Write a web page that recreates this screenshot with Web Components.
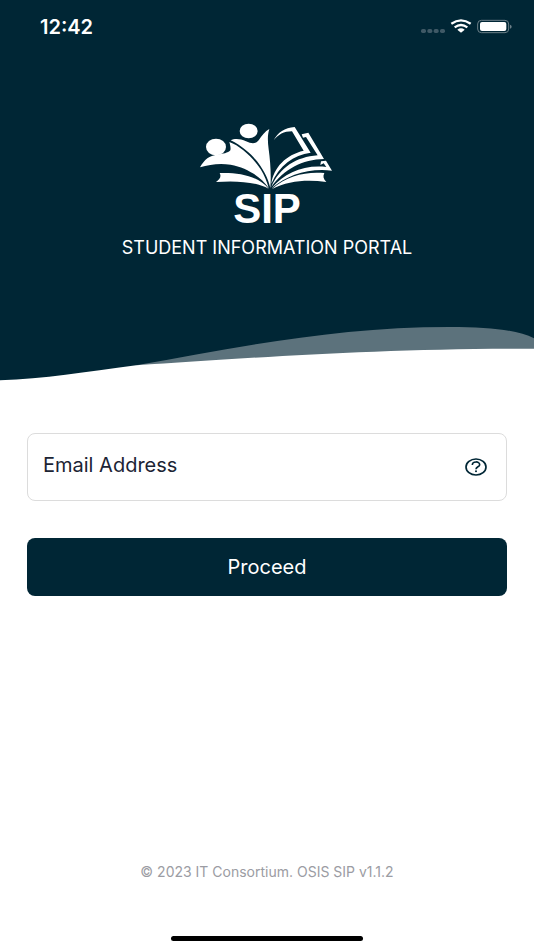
<!DOCTYPE html>
<html lang="en">
<head>
  <meta charset="UTF-8">
  <meta name="viewport" content="width=device-width, initial-scale=1.0">
  <title>Student Information Portal</title>
  <style>
    body {
      margin: 0;
      background-color: white;
      font-family: Inter, "Liberation Sans", sans-serif;
      --navy: #002635;
    }
  </style>
</head>
<body>
  <login-screen>
    <status-bar slot="status" time="12:42"></status-bar>
    <portal-logo slot="brand" short="SIP" name="STUDENT INFORMATION PORTAL"></portal-logo>
    <email-form label="Email Address" action-text="Proceed"></email-form>
    <span slot="footer">© 2023 IT Consortium. OSIS SIP v1.1.2</span>
  </login-screen>

  <script>
    class StatusBar extends HTMLElement {
      constructor() {
        super();
        this.attachShadow({ mode: "open" });
      }

      connectedCallback() {
        this.shadowRoot.innerHTML = `
          <style>
            :host {
              display: flex;
              justify-content: space-between;
              align-items: center;
              height: 54px;
              padding: 0 22px 0 40px;
              color: white;
            }
            time {
              font-size: 20px;
              font-weight: 600;
            }
            svg {
              display: block;
            }
          </style>
          <time>${this.getAttribute("time")}</time>
          <svg width="92" height="16" viewBox="0 0 276 48" role="img" aria-label="Wi-Fi on, battery full">
            <g fill="#3f5966">
              <rect x="3" y="30" width="15" height="12" rx="5"/>
              <rect x="22" y="30" width="15" height="12" rx="5"/>
              <rect x="41" y="30" width="15" height="12" rx="5"/>
              <rect x="60" y="30" width="15" height="12" rx="5"/>
            </g>
            <g fill="none" stroke="white" stroke-width="7">
              <path d="M94 14 Q123 -6 152 14"/>
              <path d="M104 25 Q123 11 142 25"/>
            </g>
            <path d="M112 32 Q123 24 134 32 L125 40 Q123 41 121 40 Z" fill="white"/>
            <rect x="173" y="4" width="93" height="37" rx="11" fill="none" stroke="#6b7f88" stroke-width="3"/>
            <rect x="180" y="9" width="79" height="27" rx="6" fill="white"/>
            <path d="M270 17 Q275 19 275 23 Q275 27 270 29 Z" fill="#6b7f88"/>
          </svg>
        `;
      }
    }

    class PortalLogo extends HTMLElement {
      constructor() {
        super();
        this.attachShadow({ mode: "open" });
      }

      connectedCallback() {
        this.shadowRoot.innerHTML = `
          <style>
            :host {
              display: flex;
              flex-direction: column;
              align-items: center;
              color: white;
              text-align: center;
            }
            svg {
              display: block;
            }
            h1 {
              margin: 0;
              font-family: "Liberation Sans", sans-serif;
              font-size: 42px;
              line-height: 36px;
            }
            p {
              margin: 9px 0 0;
              font-size: 18px;
              line-height: 24px;
            }
          </style>
          <svg width="136" height="68" viewBox="26 24 408 204" fill="white" aria-hidden="true">
            <ellipse cx="77" cy="96" rx="30" ry="25"/>
            <ellipse cx="175" cy="48" rx="27" ry="22"/>
            <!-- readers -->
            <path d="M29 157 C42 133 58 121 80 119 C98 117 113 114 120 106 C122 98 119 89 117 81 C151 93 190 130 211 163 C222 181 230 201 235 219 C213 187 171 158 121 149 C88 144 58 148 29 157 Z"/>
            <path d="M121 76 C133 70 150 71 167 79 C184 87 197 87 205 76 C215 61 224 49 237 42 C231 61 232 79 235 103 C240 140 243 180 240 219 C230 175 195 113 121 76 Z"/>
            <!-- left pages -->
            <path d="M88 174 C143 172 201 181 235 221 C197 201 139 196 77 201 C88 193 94 185 88 174 Z"/>
            <!-- right pages -->
            <path d="M250 76 C262 52 283 38 313 36 L361 113 C309 120 267 151 243 206 C250 157 287 119 340 107 L305 49 C281 49 263 59 250 76 Z"/>
            <path d="M334 58 L354 53 L401 132 C337 133 279 163 243 216 C268 157 318 126 382 121 L347 66 L338 68 Z"/>
            <path d="M392 139 L407 137 L425 167 C354 159 291 180 244 220 C283 173 340 149 408 156 L400 145 L390 150 Z"/>
            <path d="M245 222 C291 181 348 169 402 174 C397 184 399 192 408 201 C347 193 294 198 245 222 Z"/>
          </svg>
          <h1>${this.getAttribute("short")}</h1>
          <p>${this.getAttribute("name")}</p>
        `;
      }
    }

    class EmailForm extends HTMLElement {
      constructor() {
        super();
        this.attachShadow({ mode: "open" });
      }

      connectedCallback() {
        const label = this.getAttribute("label");
        this.shadowRoot.innerHTML = `
          <style>
            :host {
              display: block;
            }
            form {
              display: flex;
              flex-direction: column;
              gap: 37px;
            }
            .field {
              display: flex;
              align-items: center;
              box-sizing: border-box;
              height: 68px;
              padding: 0 18px 0 15px;
              border: 1px solid #dcdcdc;
              border-radius: 8px;
            }
            input {
              flex: 1;
              min-width: 0;
              padding: 0 0 4px;
              border: 0;
              outline: 0;
              background: none;
              color: #1c2434;
              font: inherit;
              font-size: 20px;
            }
            input::placeholder {
              color: #1c2434;
              opacity: 1;
            }
            .help {
              display: flex;
              padding: 0;
              border: 0;
              background: none;
              color: var(--navy);
            }
            .submit {
              height: 58px;
              border: 0;
              border-radius: 8px;
              background-color: var(--navy);
              color: white;
              font: inherit;
              font-size: 20px;
            }
          </style>
          <form>
            <div class="field">
              <input id="email" type="email" aria-label="${label}" placeholder="${label}">
              <button class="help" type="button" aria-label="Help">
                <svg width="24" height="20" viewBox="0 0 72 60" fill="none" stroke="currentColor">
                  <ellipse cx="36" cy="30" rx="30" ry="24" stroke-width="5"/>
                  <path d="M25 24 C25 12 47 12 47 23 C47 30 36 29 36 37" stroke-width="5"/>
                  <ellipse cx="36" cy="43" rx="3" ry="3" fill="currentColor" stroke="none"/>
                </svg>
              </button>
            </div>
            <button class="submit" type="submit">${this.getAttribute("action-text")}</button>
          </form>
        `;
      }
    }

    class LoginScreen extends HTMLElement {
      constructor() {
        super();
        this.attachShadow({ mode: "open" });
      }

      connectedCallback() {
        this.shadowRoot.innerHTML = `
          <style>
            :host {
              display: flex;
              flex-direction: column;
              min-height: 100vh;
            }
            header {
              background-color: var(--navy);
            }
            .brand {
              padding: 69px 16px 50px;
            }
            .wave {
              display: block;
              width: 100%;
              height: 72px;
            }
            main {
              padding: 51px 27px;
            }
            footer {
              display: flex;
              flex-direction: column;
              align-items: center;
              gap: 54px;
              margin-top: auto;
              padding-bottom: 9px;
              color: #9b9ca3;
              font-size: 14px;
              line-height: 20px;
            }
            .home {
              width: 36%;
              height: 5px;
              border-radius: 3px;
              background-color: black;
            }
          </style>
          <header>
            <slot name="status"></slot>
            <div class="brand"><slot name="brand"></slot></div>
            <svg class="wave" viewBox="0 0 1568 212" preserveAspectRatio="none" aria-hidden="true">
              <path d="M400 163 C700 110 980 50 1320 50 C1440 50 1520 59 1568 83 V120 Z" fill="#5c727c"/>
              <path d="M0 207 C130 204 250 182 400 163 C700 144 1100 112 1568 114 V212 H0 Z" fill="white"/>
            </svg>
          </header>
          <main><slot></slot></main>
          <footer>
            <slot name="footer"></slot>
            <div class="home"></div>
          </footer>
        `;
      }
    }

    customElements.define("status-bar", StatusBar);
    customElements.define("portal-logo", PortalLogo);
    customElements.define("email-form", EmailForm);
    customElements.define("login-screen", LoginScreen);
  </script>
</body>
</html>
